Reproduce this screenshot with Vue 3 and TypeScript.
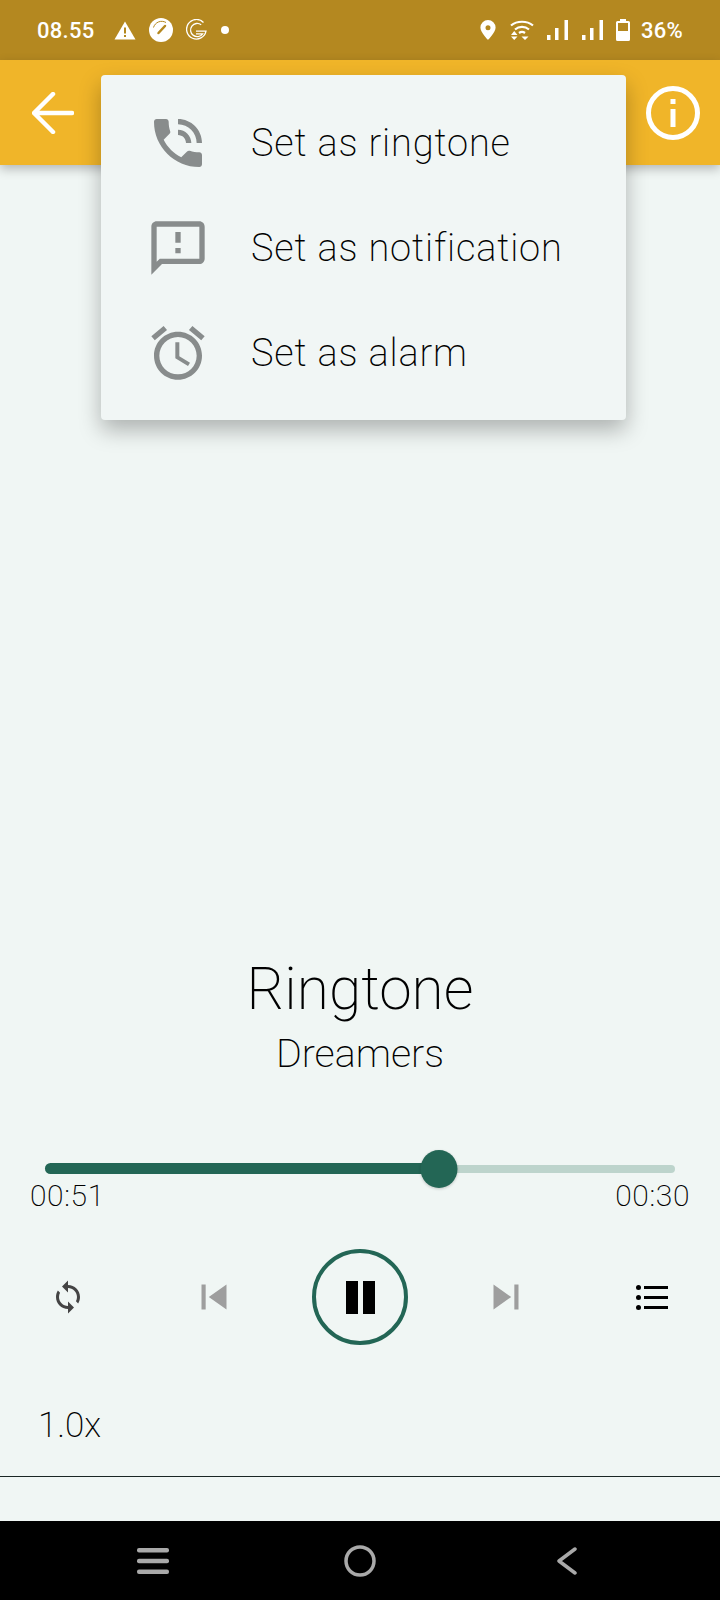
<script setup lang="ts">
interface MenuItem {
  label: string
  path: string
}

const menuItems: MenuItem[] = [
  {
    label: 'Set as ringtone',
    path: 'M20 15.5c-1.25 0-2.45-.2-3.57-.57-.35-.11-.74-.03-1.02.24l-2.2 2.2c-2.83-1.44-5.15-3.75-6.59-6.59l2.2-2.21c.28-.26.36-.65.25-1C8.7 6.45 8.5 5.25 8.5 4c0-.55-.45-1-1-1H4c-.55 0-1 .45-1 1 0 9.39 7.61 17 17 17 .55 0 1-.45 1-1v-3.5c0-.55-.45-1-1-1zM19 12h2c0-4.97-4.03-9-9-9v2c3.87 0 7 3.13 7 7zm-4 0h2c0-2.76-2.24-5-5-5v2c1.66 0 3 1.34 3 3z',
  },
  {
    label: 'Set as notification',
    path: 'M20 2H4c-1.1 0-1.99.9-1.99 2L2 22l4-4h14c1.1 0 2-.9 2-2V4c0-1.1-.9-2-2-2zm0 14H5.17L4 17.17V4h16v12zM11 12h2v2h-2zm0-6h2v4h-2z',
  },
  {
    label: 'Set as alarm',
    path: 'M22 5.72l-4.6-3.86-1.29 1.53 4.6 3.86L22 5.72zM7.88 3.39L6.6 1.86 2 5.71l1.29 1.53 4.59-3.85zM12.5 8H11v6l4.75 2.85.75-1.23-4-2.37V8zM12 4c-4.97 0-9 4.03-9 9s4.02 9 9 9c4.97 0 9-4.03 9-9s-4.03-9-9-9zm0 16c-3.87 0-7-3.13-7-7s3.13-7 7-7 7 3.13 7 7-3.13 7-7 7z',
  },
]

const progress = 62.5
</script>

<template>
  <div class="screen">
    <div class="status-bar">
      <span class="clock">08.55</span>
      <svg class="st-alert" viewBox="0 0 22 19">
        <path fill="#fff" d="M11 0.5L21.5 18.5H0.5Z" />
        <path fill="#b48820" d="M10 6.5h2v6h-2zM10 14h2v2h-2z" />
      </svg>
      <svg class="st-gauge" viewBox="0 0 24 24">
        <circle cx="12" cy="12" r="12" fill="#fff" />
        <path d="M4.500 9.500A8.500 8.500 0 0 1 17 4.500" fill="none" stroke="#b48820" stroke-width="1" />
        <path d="M9.500 15L16 8" stroke="#b48820" stroke-width="2.500" stroke-linecap="round" />
      </svg>
      <svg class="st-g" viewBox="0 0 21 22" fill="none" stroke="#fff" stroke-width="1.300">
        <path d="M17.500 3.500A9.800 9.800 0 1 0 20 12.200H10" />
        <path d="M15.200 5.800A6.600 6.600 0 1 0 16.600 14.800H10" />
      </svg>
      <span class="st-dot"></span>
      <span class="status-spacer"></span>
      <svg class="st-pin" viewBox="0 0 16 20">
        <path fill="#fff" fill-rule="evenodd" d="M8 0a7.600 7.600 0 0 1 7.600 7.600C15.600 12.500 8 20 8 20S.4 12.500.4 7.600A7.600 7.600 0 0 1 8 0zm0 5.200a2.500 2.500 0 1 0 0 5 2.500 2.500 0 0 0 0-5z" />
      </svg>
      <svg class="st-wifi" viewBox="0 0 24 20" fill="none" stroke="#fff" stroke-width="2.200">
        <path d="M1 5.500C7 .5 17 .5 23 5.500" />
        <path d="M5 9.500C9 6 15 6 19 9.500" />
        <path d="M9 13C11 11.500 13 11.500 15 13" />
        <path fill="#fff" stroke="none" d="M4.200 11L7.500 15H1zM1 16.500h6.500L4.200 20zM11.500 16.500h7L15 20z" />
      </svg>
      <svg class="st-signal" viewBox="0 0 22 20" fill="#fff">
        <rect x="0" y="15" width="3.500" height="5" />
        <rect x="8" y="8" width="3.500" height="12" />
        <rect x="17.500" y="0" width="3.500" height="20" />
      </svg>
      <svg class="st-signal" viewBox="0 0 22 20" fill="#fff">
        <rect x="0" y="15" width="3.500" height="5" />
        <rect x="8" y="8" width="3.500" height="12" />
        <rect x="17.500" y="0" width="3.500" height="20" />
      </svg>
      <svg class="st-battery" viewBox="0 0 14 22">
        <path fill="#fff" fill-rule="evenodd" d="M4 0h6v2h2.500A1.500 1.500 0 0 1 14 3.500V20.500A1.500 1.500 0 0 1 12.500 22H1.500A1.500 1.500 0 0 1 0 20.500V3.500A1.500 1.500 0 0 1 1.500 2H4zM2 4v8h10V4z" />
      </svg>
      <span class="battery-text">36%</span>
    </div>

    <header class="app-bar">
      <svg class="back-arrow" viewBox="0 0 42 42" fill="none" stroke="#fff" stroke-width="4.500" stroke-linecap="round" stroke-linejoin="round">
        <path d="M21 2L2 21l19 19M3 21h37" />
      </svg>
      <svg class="info-icon" viewBox="0 0 54 54">
        <circle cx="27" cy="27" r="24.500" fill="none" stroke="#fff" stroke-width="5" />
        <path fill="#fff" d="M24.500 13h5v5h-5zM24.500 23h5v18h-5z" />
      </svg>
    </header>

    <div class="menu">
      <div v-for="item in menuItems" :key="item.label" class="menu-row">
        <svg class="menu-icon" viewBox="0 0 24 24"><path :d="item.path" /></svg>
        <span class="menu-label">{{ item.label }}</span>
      </div>
    </div>

    <main class="player">
      <h1 class="title">Ringtone</h1>
      <p class="artist">Dreamers</p>

      <div class="slider">
        <div class="track"></div>
        <div class="track-active" :style="{ width: progress + '%' }"></div>
        <div class="thumb" :style="{ left: progress + '%' }"></div>
      </div>
      <div class="times">
        <span>00:51</span>
        <span>00:30</span>
      </div>

      <div class="controls">
        <svg class="ctl-repeat" viewBox="0 0 24 24">
          <path d="M12 4V1L8 5l4 4V6c3.310 0 6 2.690 6 6 0 1.010-.25 1.970-.7 2.800l1.460 1.460C19.540 15.030 20 13.570 20 12c0-4.420-3.580-8-8-8zm0 14c-3.310 0-6-2.690-6-6 0-1.010.25-1.970.7-2.800L5.240 7.740C4.460 8.970 4 10.430 4 12c0 4.420 3.580 8 8 8v3l4-4-4-4v3z" />
        </svg>
        <svg class="ctl-skip" viewBox="0 0 24 24"><path d="M6 6h2v12H6zm3.500 6l8.500 6V6z" /></svg>
        <div class="pause-btn">
          <span class="pause-bar"></span>
          <span class="pause-bar"></span>
        </div>
        <svg class="ctl-skip" viewBox="0 0 24 24"><path d="M6 18l8.500-6L6 6v12zM16 6v12h2V6h-2z" /></svg>
        <svg class="ctl-queue" viewBox="0 0 32 25">
          <circle cx="2.500" cy="2.500" r="2.500" />
          <circle cx="2.500" cy="12.500" r="2.500" />
          <circle cx="2.500" cy="22.500" r="2.500" />
          <rect x="8" y="1" width="24" height="3" />
          <rect x="8" y="11" width="24" height="3" />
          <rect x="8" y="21" width="24" height="3" />
        </svg>
      </div>

      <div class="speed">1.0x</div>
      <div class="divider"></div>
    </main>

    <nav class="nav-bar">
      <svg class="nav-menu" viewBox="0 0 32 26" fill="#a9a9a9">
        <rect x="0" y="0" width="32" height="4.500" rx="2" />
        <rect x="0" y="10.700" width="32" height="4.500" rx="2" />
        <rect x="0" y="21.500" width="32" height="4.500" rx="2" />
      </svg>
      <svg class="nav-home" viewBox="0 0 32 32" fill="none" stroke="#a9a9a9" stroke-width="3.500">
        <circle cx="16" cy="16" r="14" />
      </svg>
      <svg class="nav-back" viewBox="0 0 20 28" fill="none" stroke="#a9a9a9" stroke-width="3.500" stroke-linecap="round" stroke-linejoin="round">
        <path d="M18 2L2 14l16 12" />
      </svg>
    </nav>
  </div>
</template>

<style scoped>
.screen {
  position: relative;
  width: 720px;
  height: 1600px;
  display: flex;
  flex-direction: column;
  overflow: hidden;
  background-color: #f0f6f4;
  font-family: Roboto, 'Liberation Sans', sans-serif;
  color: #000;
}

.status-bar {
  height: 60px;
  flex-shrink: 0;
  display: flex;
  align-items: center;
  padding: 0 37px;
  background-color: #b48820;
  color: #fff;
}

.clock,
.battery-text {
  font-size: 22px;
  font-weight: 500;
  letter-spacing: 0.3px;
}

.st-alert { width: 22px; height: 19px; margin-left: 19px; }
.st-gauge { width: 24px; height: 24px; margin-left: 13px; }
.st-g { width: 21px; height: 22px; margin-left: 13px; }
.st-dot { width: 8px; height: 8px; margin-left: 14px; border-radius: 50%; background-color: #fff; }
.status-spacer { flex: 1; }
.st-pin { width: 16px; height: 20px; }
.st-wifi { width: 24px; height: 20px; margin-left: 14px; }
.st-signal { width: 22px; height: 20px; margin-left: 13px; }
.st-battery { width: 14px; height: 22px; margin-left: 12px; }
.battery-text { margin-left: 11px; }

.app-bar {
  height: 105px;
  flex-shrink: 0;
  display: flex;
  align-items: center;
  justify-content: space-between;
  padding: 0 20px 0 32px;
  background-color: #f0b529;
  box-shadow: 0 4px 10px rgba(0, 0, 0, 0.25);
  z-index: 1;
}

.back-arrow { width: 42px; height: 42px; }
.info-icon { width: 54px; height: 54px; }

.menu {
  position: absolute;
  top: 75px;
  left: 101px;
  width: 525px;
  padding: 15px 0;
  border-radius: 4px;
  background-color: #f1f6f5;
  box-shadow: 0 10px 22px rgba(0, 0, 0, 0.28);
  z-index: 2;
}

.menu-row {
  height: 105px;
  display: flex;
  align-items: center;
  gap: 41px;
  padding-left: 45px;
}

.menu-icon {
  width: 64px;
  height: 64px;
  fill: #888c8c;
}

.menu-label {
  font-size: 38px;
  font-weight: 200;
  letter-spacing: 0.85px;
}

.player {
  flex: 1;
  min-height: 0;
  display: flex;
  flex-direction: column;
  align-items: center;
}

.title {
  margin: 783px 0 0;
  font-size: 58.5px;
  line-height: 82px;
  font-weight: 200;
}

.artist {
  margin: 0;
  font-size: 39.500px;
  line-height: 48px;
  font-weight: 200;
}

.slider {
  position: relative;
  flex-shrink: 0;
  width: 630px;
  height: 38px;
  margin-top: 72px;
}

.track {
  position: absolute;
  top: 15px;
  left: 0;
  right: 0;
  height: 8px;
  border-radius: 4px;
  background-color: #bdd4cc;
}

.track-active {
  position: absolute;
  top: 13px;
  left: 0;
  height: 11px;
  border-radius: 6px;
  background-color: #236655;
}

.thumb {
  position: absolute;
  top: 0;
  width: 37px;
  height: 38px;
  border-radius: 50%;
  background-color: #236655;
  box-shadow: 0 1px 3px rgba(0, 0, 0, 0.2);
  transform: translateX(-50%);
}

.times {
  width: 660px;
  margin-top: -9px;
  display: flex;
  justify-content: space-between;
  font-size: 30px;
  line-height: 34px;
  font-weight: 200;
  letter-spacing: 0.6px;
}

.controls {
  height: 96px;
  margin-top: 36px;
  display: grid;
  grid-template-columns: repeat(5, 146px);
  justify-content: center;
  justify-items: center;
  align-items: center;
}

.ctl-repeat { width: 36px; height: 36px; fill: #444; }
.ctl-skip { width: 50px; height: 50px; fill: #9e9e9e; }
.ctl-queue { width: 32px; height: 25px; fill: #000; }

.pause-btn {
  width: 96px;
  height: 96px;
  box-sizing: border-box;
  display: flex;
  align-items: center;
  justify-content: center;
  gap: 5px;
  border: 4px solid #236655;
  border-radius: 50%;
}

.pause-bar {
  width: 12px;
  height: 33px;
  background-color: #000;
}

.speed {
  align-self: flex-start;
  margin: 59px 0 0 38px;
  font-size: 35px;
  line-height: 44px;
  font-weight: 200;
}

.divider {
  width: 100%;
  height: 1px;
  flex-shrink: 0;
  margin-top: 28px;
  background-color: #1a2624;
}

.nav-bar {
  height: 79px;
  flex-shrink: 0;
  display: flex;
  align-items: center;
  padding-left: 137px;
  background-color: #000;
}

.nav-menu { width: 32px; height: 26px; }
.nav-home { width: 32px; height: 32px; margin-left: 175px; }
.nav-back { width: 20px; height: 28px; margin-left: 181px; }
</style>

<style>
html,
body {
  margin: 0;
  padding: 0;
}
</style>
